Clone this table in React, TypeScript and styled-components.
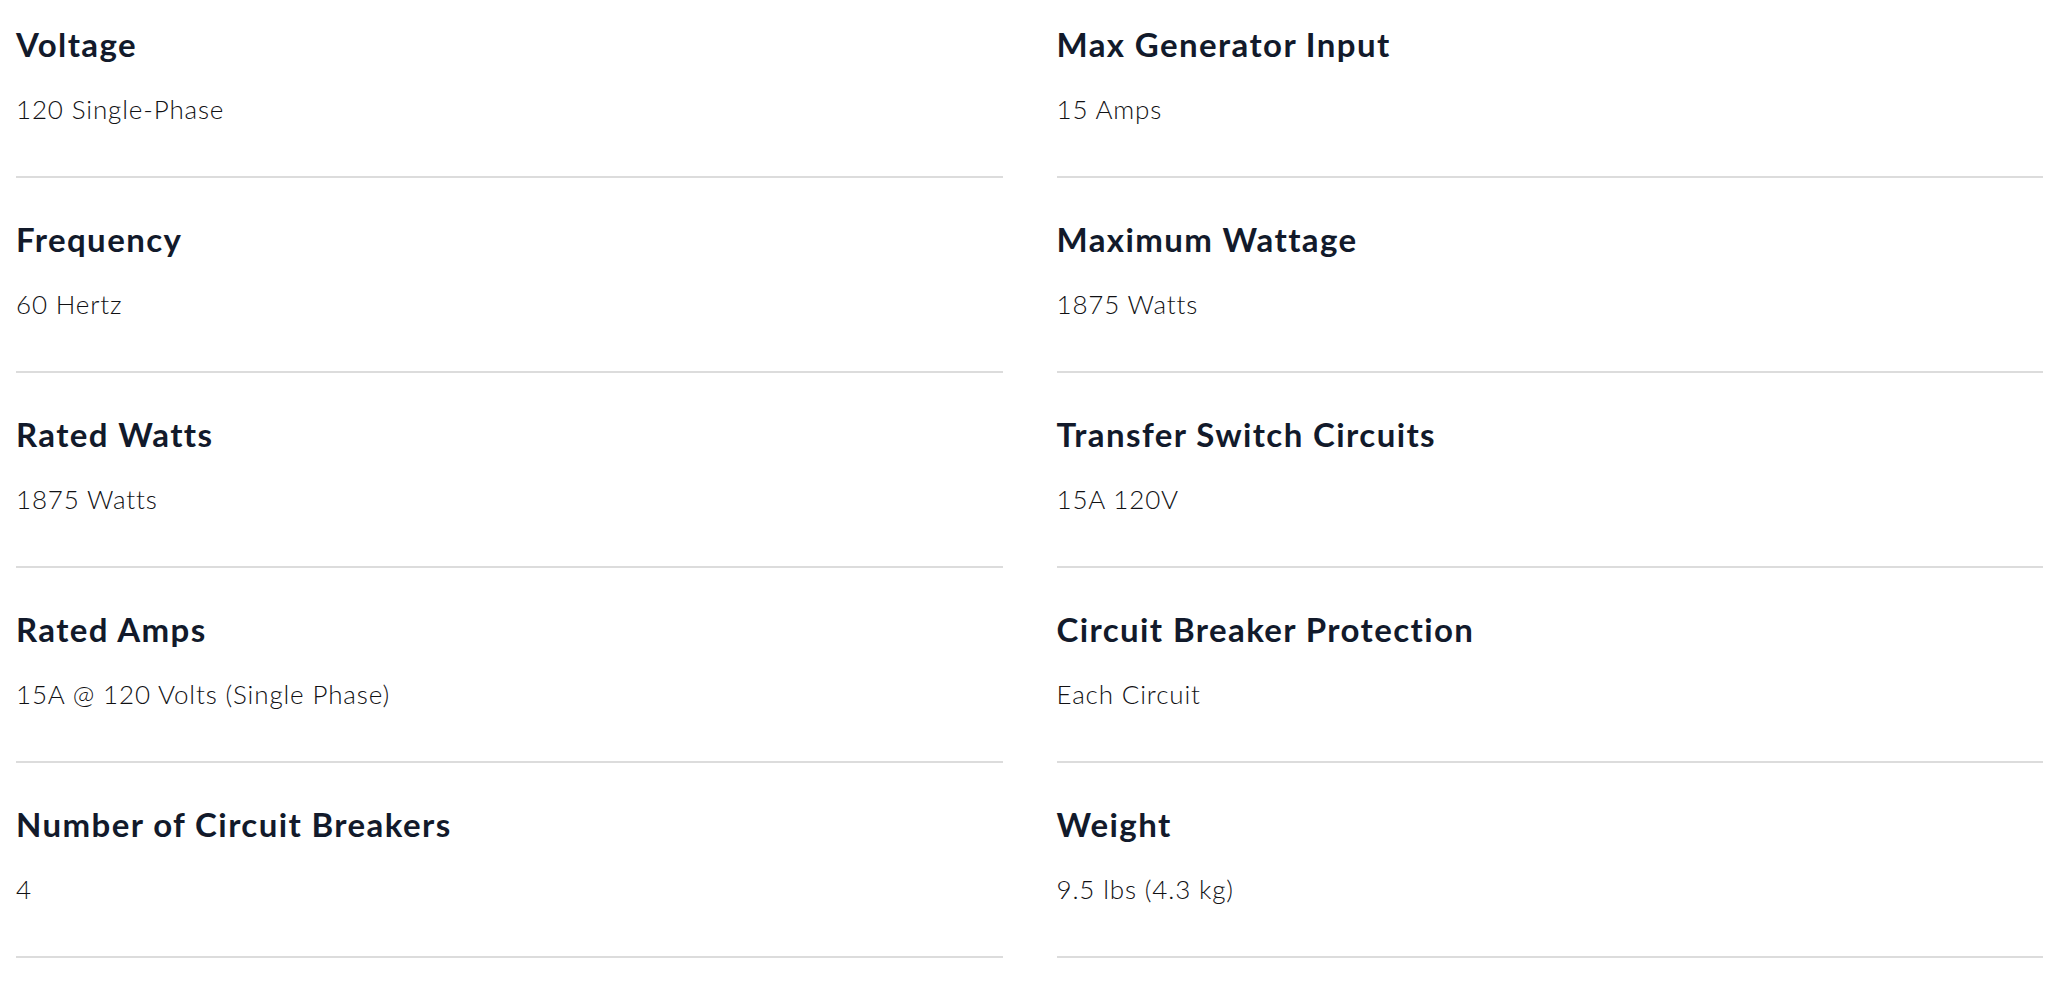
import React from "react";
import styled, { createGlobalStyle } from "styled-components";

const specs = [
  { label: "Voltage", value: "120 Single-Phase" },
  { label: "Max Generator Input", value: "15 Amps" },
  { label: "Frequency", value: "60 Hertz" },
  { label: "Maximum Wattage", value: "1875 Watts" },
  { label: "Rated Watts", value: "1875 Watts" },
  { label: "Transfer Switch Circuits", value: "15A 120V" },
  { label: "Rated Amps", value: "15A @ 120 Volts (Single Phase)" },
  { label: "Circuit Breaker Protection", value: "Each Circuit" },
  { label: "Number of Circuit Breakers", value: "4" },
  { label: "Weight", value: "9.5 lbs (4.3 kg)" },
];

const App: React.FC = () => {
  return (
    <>
      <GlobalStyle />
      <SpecGrid>
        {specs.map((spec) => (
          <SpecItem key={spec.label}>
            <Label>{spec.label}</Label>
            <Value>{spec.value}</Value>
          </SpecItem>
        ))}
      </SpecGrid>
    </>
  );
};

export default App;

const GlobalStyle = createGlobalStyle`
  html, body {
    margin: 0;
    padding: 0;
    background: #ffffff;
  }
  body {
    font-family: Lato, "Noto Sans", sans-serif;
  }
`;

const SpecGrid = styled.div`
  display: grid;
  grid-template-columns: 1fr 1fr;
  column-gap: 54px;
  padding: 0 13px 0 16px;
`;

const SpecItem = styled.div`
  display: flex;
  flex-direction: column;
  padding: 41px 0 49px;
  border-bottom: 2px solid #dcdcdc;

  &:nth-child(-n + 2) {
    padding-top: 24px;
  }
`;

const Label = styled.h3`
  margin: 0;
  font-size: 33px;
  line-height: 40px;
  font-weight: 700;
  letter-spacing: 1.4px;
  color: #121a2b;
`;

const Value = styled.p`
  margin: 27px 0 0;
  font-size: 26px;
  line-height: 36px;
  font-weight: 300;
  letter-spacing: 0.85px;
  color: #111114;
`;
